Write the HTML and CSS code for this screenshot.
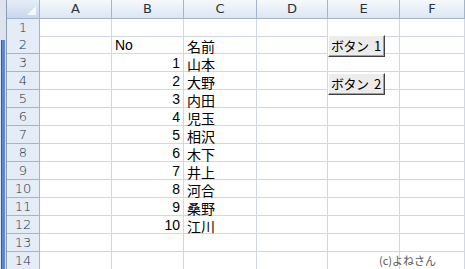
FILE: index.html
```html
<!DOCTYPE html>
<html lang="ja">
<head>
    <meta charset="UTF-8">
    <title>ボタン</title>
    <link rel="stylesheet" href="styles.css">
</head>
<body>
    <div class="window">
        <div class="topbar"></div>
        <div class="main">
            <div class="edge"><div class="edge-bar"></div></div>
            <div class="sheet">
                <div class="row head">
                    <div class="rh corner"></div>
                    <div class="ch">A</div>
                    <div class="ch">B</div>
                    <div class="ch">C</div>
                    <div class="ch">D</div>
                    <div class="ch">E</div>
                    <div class="ch">F</div>
                </div>
                <div class="row first">
                    <div class="rh">1</div>
                    <div class="c"></div><div class="c"></div><div class="c"></div>
                    <div class="c"></div><div class="c"></div><div class="c"></div>
                </div>
                <div class="row">
                    <div class="rh">2</div>
                    <div class="c"></div><div class="c latin">No</div><div class="c">名前</div>
                    <div class="c"></div><div class="c"></div><div class="c"></div>
                </div>
                <div class="row">
                    <div class="rh">3</div>
                    <div class="c"></div><div class="c num">1</div><div class="c">山本</div>
                    <div class="c"></div><div class="c"></div><div class="c"></div>
                </div>
                <div class="row">
                    <div class="rh">4</div>
                    <div class="c"></div><div class="c num">2</div><div class="c">大野</div>
                    <div class="c"></div><div class="c"></div><div class="c"></div>
                </div>
                <div class="row">
                    <div class="rh">5</div>
                    <div class="c"></div><div class="c num">3</div><div class="c">内田</div>
                    <div class="c"></div><div class="c"></div><div class="c"></div>
                </div>
                <div class="row">
                    <div class="rh">6</div>
                    <div class="c"></div><div class="c num">4</div><div class="c">児玉</div>
                    <div class="c"></div><div class="c"></div><div class="c"></div>
                </div>
                <div class="row">
                    <div class="rh">7</div>
                    <div class="c"></div><div class="c num">5</div><div class="c">相沢</div>
                    <div class="c"></div><div class="c"></div><div class="c"></div>
                </div>
                <div class="row">
                    <div class="rh">8</div>
                    <div class="c"></div><div class="c num">6</div><div class="c">木下</div>
                    <div class="c"></div><div class="c"></div><div class="c"></div>
                </div>
                <div class="row">
                    <div class="rh">9</div>
                    <div class="c"></div><div class="c num">7</div><div class="c">井上</div>
                    <div class="c"></div><div class="c"></div><div class="c"></div>
                </div>
                <div class="row">
                    <div class="rh">10</div>
                    <div class="c"></div><div class="c num">8</div><div class="c">河合</div>
                    <div class="c"></div><div class="c"></div><div class="c"></div>
                </div>
                <div class="row">
                    <div class="rh">11</div>
                    <div class="c"></div><div class="c num">9</div><div class="c">桑野</div>
                    <div class="c"></div><div class="c"></div><div class="c"></div>
                </div>
                <div class="row">
                    <div class="rh">12</div>
                    <div class="c"></div><div class="c num">10</div><div class="c">江川</div>
                    <div class="c"></div><div class="c"></div><div class="c"></div>
                </div>
                <div class="row">
                    <div class="rh">13</div>
                    <div class="c"></div><div class="c"></div><div class="c"></div>
                    <div class="c"></div><div class="c"></div><div class="c"></div>
                </div>
                <div class="row">
                    <div class="rh">14</div>
                    <div class="c"></div><div class="c"></div><div class="c"></div>
                    <div class="c"></div><div class="c"></div><div class="c"></div>
                </div>

                <!-- form buttons float over the cells -->
                <button class="sheet-btn btn-1">ボタン 1</button>
                <button class="sheet-btn btn-2">ボタン 2</button>
                <div class="credit">(c)よねさん</div>
            </div>
        </div>
    </div>
</body>
</html>
```

FILE: styles.css
```css
* {
    box-sizing: border-box;
}
body {
    margin: 0;
    width: 465px;
    height: 269px;
    overflow: hidden;
    background: #ffffff;
    font-family: "Noto Sans CJK JP", "Liberation Sans", sans-serif;
}
.window {
    display: flex;
    flex-direction: column;
    height: 269px;
}
.topbar {
    height: 3px;
    background: #3c3f44;
}
.main {
    display: flex;
    flex: 1;
}
.edge {
    width: 7px;
    background: #dfe4ec;
    border-right: 1px solid #8a9bb5;
    padding-top: 40px;
}
.edge-bar {
    margin-left: 1px;
    width: 4px;
    height: 100%;
    background: #5f86d6;
    border-left: 1px solid #3e5a99;
}
.sheet {
    position: relative;
    flex: 1;
}
.row {
    display: grid;
    grid-template-columns: 33px 72px 72px 73px 71px 72px 1fr;
    height: 18px;
}
.row.head {
    height: 19px;
}
.row.first {
    height: 17px;
}
.rh {
    background: #e4ecf7;
    border-right: 1px solid #9eb6ce;
    border-bottom: 1px solid #9eb6ce;
    color: #27313e;
    font-size: 13px;
    line-height: 17px;
    text-align: center;
    font-family: "DejaVu Sans", sans-serif;
    font-weight: 300;
}
.ch {
    background: linear-gradient(#f6f9fc, #dde6f2);
    border-right: 1px solid #9eb6ce;
    border-bottom: 1px solid #9eb6ce;
    color: #27313e;
    font-size: 13px;
    line-height: 18px;
    text-align: center;
    font-family: "DejaVu Sans", sans-serif;
}
.corner {
    position: relative;
    background: linear-gradient(#e6edf7, #c9d7ec);
}
.corner::after {
    content: "";
    position: absolute;
    right: 3px;
    bottom: 3px;
    border-left: 9px solid transparent;
    border-bottom: 9px solid #f4f7fb;
}
.c {
    display: flex;
    align-items: flex-end;
    padding: 0 3px 0 3px;
    border-right: 1px solid #d0d7e5;
    border-bottom: 1px solid #d0d7e5;
    font-size: 14px;
    line-height: 14px;
    color: #000000;
    white-space: nowrap;
}
.c.num,
.c.latin {
    font-family: "Liberation Sans", sans-serif;
    padding-bottom: 1px;
}
.c.num {
    justify-content: flex-end;
}
.sheet-btn {
    position: absolute;
    left: 321px;
    width: 57px;
    height: 22px;
    padding: 0 0 0 2px;
    background: #ececec;
    border: 1px solid;
    border-color: #ffffff #404040 #404040 #ffffff;
    box-shadow: inset -1px -1px #a0a0a0;
    font-family: "Noto Sans CJK JP", sans-serif;
    font-size: 13px;
    line-height: 18px;
    letter-spacing: -0.5px;
    word-spacing: 3px;
    color: #000000;
    text-align: left;
    white-space: nowrap;
}
.btn-1 {
    top: 35px;
}
.btn-2 {
    top: 73px;
}
.credit {
    position: absolute;
    left: 372px;
    top: 252px;
    font-size: 11px;
    color: #555555;
}
```
